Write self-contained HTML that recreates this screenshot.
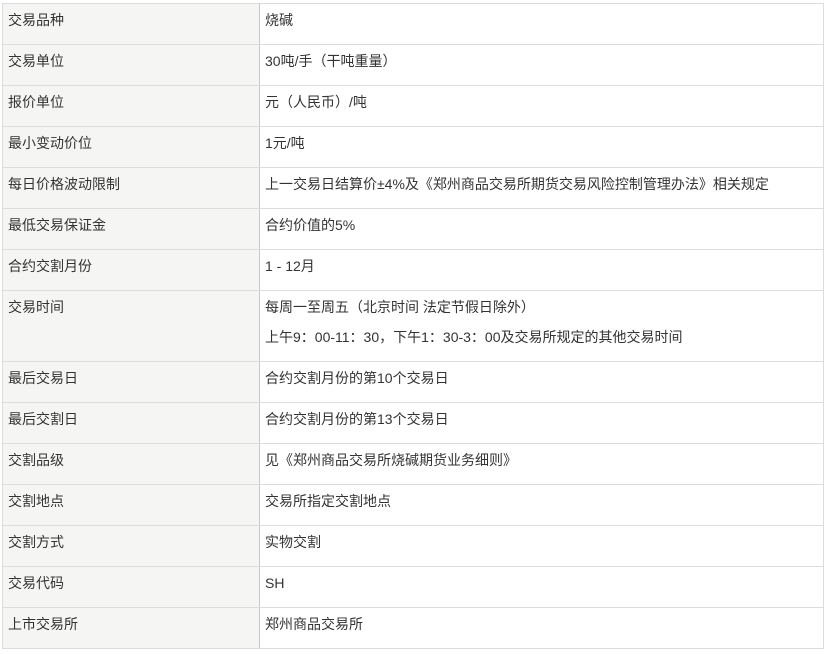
<!DOCTYPE html>
<html><head><meta charset="utf-8"><style>
body{margin:0;background:#fff;font-family:"Liberation Sans","Noto Sans CJK SC",sans-serif;font-size:14px;color:#333;}
table{position:absolute;left:2px;top:3px;width:822px;border-collapse:collapse;border:1px solid #c8c8c8;}
td{border:1px solid #dcdcdc;height:40px;padding:0 5px;vertical-align:top;line-height:30px;padding-top:1px;box-sizing:border-box;}
td.l{background:#f5f5f3;width:257px;border-right:1px solid #c8c8c8;}
p{margin:0;}
</style></head><body>
<table>
<tr><td class="l" style="height:41px">交易品种</td><td>烧碱</td></tr>
<tr><td class="l" style="height:41px">交易单位</td><td>30吨/手（干吨重量）</td></tr>
<tr><td class="l" style="height:41px">报价单位</td><td>元（人民币）/吨</td></tr>
<tr><td class="l" style="height:41px">最小变动价位</td><td>1元/吨</td></tr>
<tr><td class="l" style="height:41px">每日价格波动限制</td><td>上一交易日结算价±4%及《郑州商品交易所期货交易风险控制管理办法》相关规定</td></tr>
<tr><td class="l" style="height:41px">最低交易保证金</td><td>合约价值的5%</td></tr>
<tr><td class="l" style="height:41px">合约交割月份</td><td>1 - 12月</td></tr>
<tr><td class="l" style="height:71px">交易时间</td><td><p>每周一至周五（北京时间 法定节假日除外）</p><p>上午9：00-11：30，下午1：30-3：00及交易所规定的其他交易时间</p></td></tr>
<tr><td class="l" style="height:41px">最后交易日</td><td>合约交割月份的第10个交易日</td></tr>
<tr><td class="l" style="height:41px">最后交割日</td><td>合约交割月份的第13个交易日</td></tr>
<tr><td class="l" style="height:41px">交割品级</td><td>见《郑州商品交易所烧碱期货业务细则》</td></tr>
<tr><td class="l" style="height:41px">交割地点</td><td>交易所指定交割地点</td></tr>
<tr><td class="l" style="height:41px">交割方式</td><td>实物交割</td></tr>
<tr><td class="l" style="height:41px">交易代码</td><td>SH</td></tr>
<tr><td class="l" style="height:41px">上市交易所</td><td>郑州商品交易所</td></tr>
</table>
</body></html>
